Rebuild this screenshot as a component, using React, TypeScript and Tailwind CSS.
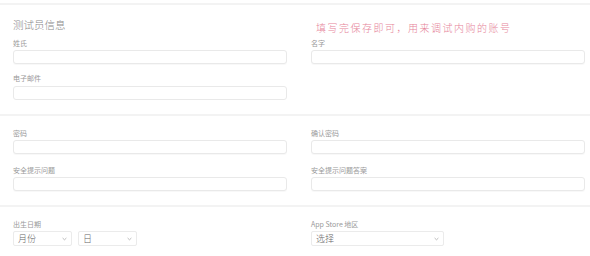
const font = { fontFamily: '"Noto Sans CJK SC", "Liberation Sans", sans-serif' }

function Field({ label, className = "" }: { label: string; className?: string }) {
  return (
    <div className={className}>
      <div className="h-[10px] text-[7px] leading-[10px] text-[#999]">{label}</div>
      <div className="mt-[2px] h-[14px] w-full rounded-[3px] border border-[#e9e9e9] bg-white shadow-[0_1px_1px_rgba(0,0,0,0.03)]" />
    </div>
  )
}

function Select({ text, w }: { text: string; w: string }) {
  return (
    <div
      className={`flex h-[15px] items-center justify-between rounded-[2px] border border-[#ebebeb] bg-white pl-[4px] pr-[4px] ${w}`}
    >
      <span className="text-[9px] font-light leading-none text-[#666]">{text}</span>
      <svg width="5" height="4" viewBox="0 0 5 4" className="text-[#aaa]">
        <path d="M0.6 1 L2.5 2.8 L4.4 1" fill="none" stroke="currentColor" strokeWidth="0.8" />
      </svg>
    </div>
  )
}

export default function App() {
  return (
    <div className="h-[256px] w-[590px] overflow-hidden bg-white" style={font}>
      {/* section 1 */}
      <div className="mt-[3px] border-t-2 border-[#f3f3f3] pl-[13px] pr-[5px] pb-[14px] pt-[11px]">
        <div className="grid grid-cols-2 gap-x-[24px]">
          <div className="h-[16px] pt-[1px] text-[10.5px] font-light leading-[16px] text-[#888]">测试员信息</div>
          <div className="h-[16px] whitespace-nowrap pl-[5px] pt-[4px] text-[10px] font-light leading-[16px] tracking-[1.5px] text-[#e68499]">
            填写完保存即可，用来调试内购的账号
          </div>
          <Field label="姓氏" className="mt-[6px]" />
          <Field label="名字" className="mt-[6px]" />
          <div className="mt-[9px]">
            <div className="h-[10px] text-[7px] leading-[10px] text-[#999]">电子邮件</div>
            <div className="mt-[3px] h-[14px] w-full rounded-[3px] border border-[#e9e9e9] bg-white" />
          </div>
          <div />
        </div>
      </div>

      {/* section 2 */}
      <div className="border-t-2 border-[#f3f3f3] pl-[13px] pr-[5px] pb-[14px] pt-[12px]">
        <div className="grid grid-cols-2 gap-x-[24px]">
          <Field label="密码" />
          <Field label="确认密码" />
          <Field label="安全提示问题" className="mt-[11px]" />
          <Field label="安全提示问题答案" className="mt-[11px]" />
        </div>
      </div>

      {/* section 3 */}
      <div className="border-t-2 border-[#f3f3f3] pl-[13px] pr-[5px] pt-[12px]">
        <div className="grid grid-cols-2 gap-x-[24px]">
          <div>
            <div className="h-[10px] text-[7px] leading-[10px] text-[#999]">出生日期</div>
            <div className="mt-[2px] flex gap-[6px]">
              <Select text="月份" w="w-[59px]" />
              <Select text="日" w="w-[59px]" />
            </div>
          </div>
          <div>
            <div className="h-[10px] text-[7px] leading-[10px] text-[#999]">App Store 地区</div>
            <div className="mt-[2px]">
              <Select text="选择" w="w-[133px]" />
            </div>
          </div>
        </div>
      </div>
    </div>
  )
}
